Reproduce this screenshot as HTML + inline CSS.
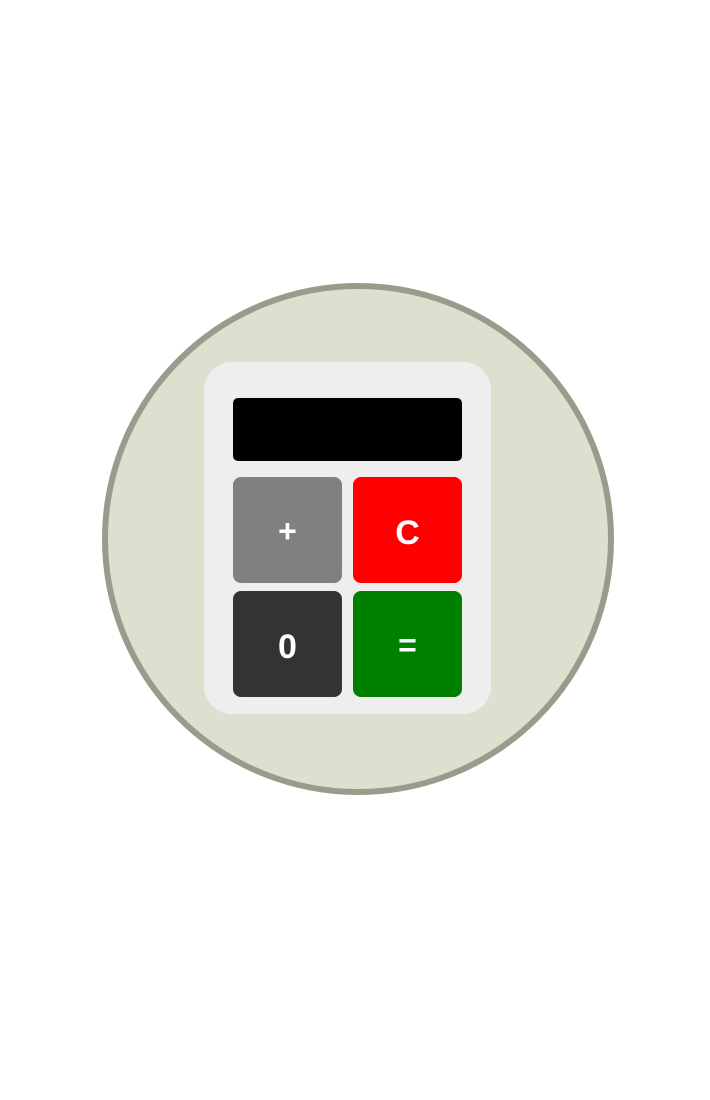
<!DOCTYPE html>
<html><head><meta charset="utf-8"><style>
html,body{margin:0;padding:0;background:#fff;width:710px;height:1100px;overflow:hidden}
svg{display:block}
text{font-family:"Liberation Sans",Arial,sans-serif;font-weight:bold;fill:#fff}
</style></head><body>
<svg width="710" height="1100" viewBox="0 0 710 1100">
<circle cx="358" cy="539" r="253" fill="#dedfce" stroke="#9a9c8b" stroke-width="6"/>
<rect x="204" y="362" width="287" height="352" rx="28" fill="#eeeeee"/>
<rect x="233" y="398" width="229" height="63" rx="5" fill="#000"/>
<rect x="233" y="477" width="109" height="106" rx="8" fill="#808080"/>
<rect x="353" y="477" width="109" height="106" rx="8" fill="#ff0000"/>
<rect x="233" y="591" width="109" height="106" rx="8" fill="#333333"/>
<rect x="353" y="591" width="109" height="106" rx="8" fill="#008000"/>
<text x="287.5" y="542" font-size="32" text-anchor="middle">+</text>
<text x="407.5" y="544" font-size="34" text-anchor="middle">C</text>
<text x="287.5" y="658" font-size="34" text-anchor="middle">0</text>
<text x="407.5" y="656" font-size="32" text-anchor="middle">=</text>
</svg>
</body></html>
